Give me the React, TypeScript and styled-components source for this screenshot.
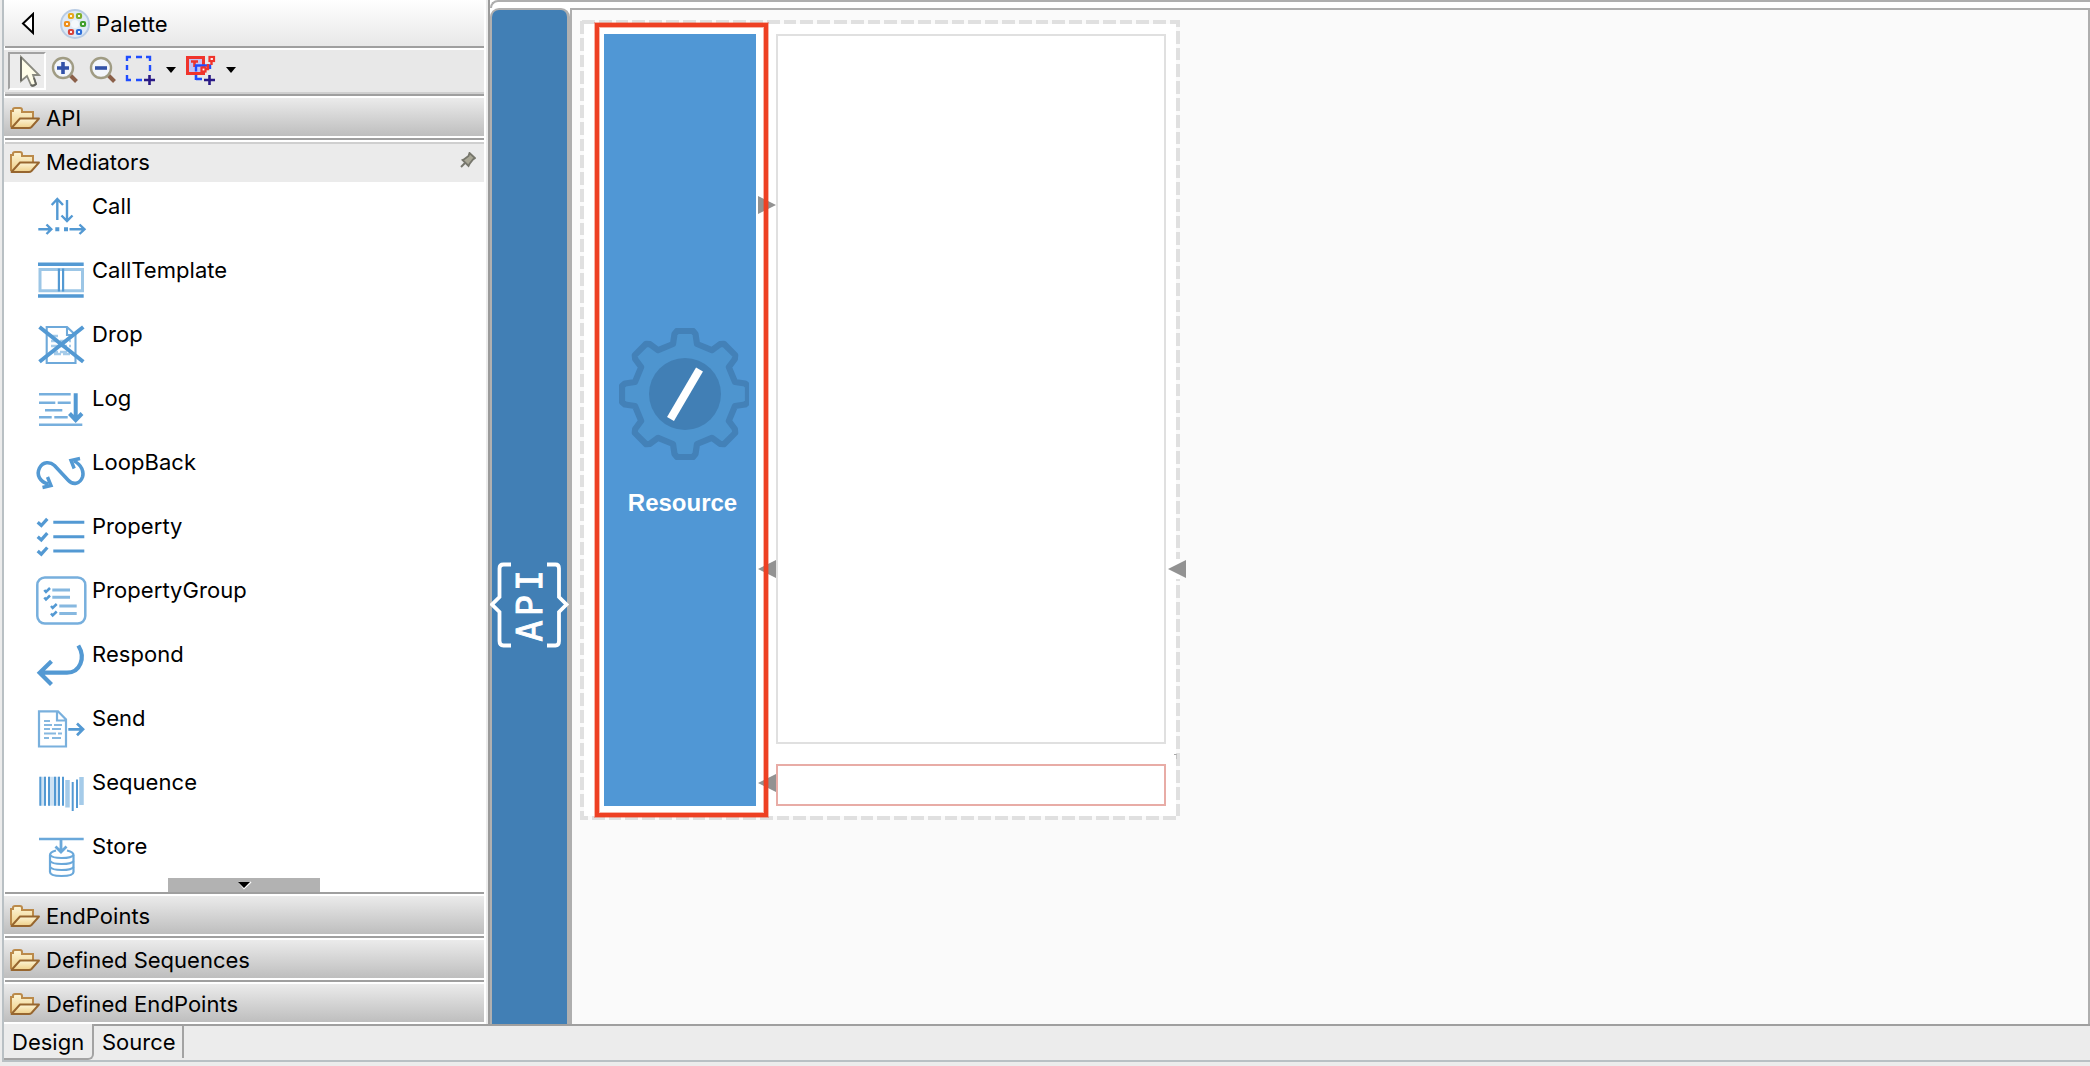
import React from 'react';
import styled, { createGlobalStyle } from 'styled-components';

const GlobalStyle = createGlobalStyle`
  * { box-sizing: border-box; }
  html, body { margin: 0; padding: 0; overflow: hidden; }
  body { font-family: Inter, "Liberation Sans", sans-serif; color: #000; background: #ececec; }
  svg { display: block; flex: none; }
`;

const LINE = '#9f9f9f';
const ICON = '#5399d3';
const SOFT = '#a5cbe9';

const Window = styled.div`
  width: 2090px;
  height: 1066px;
  display: flex;
  flex-direction: column;
  background: #ececec;
`;

const Workspace = styled.div`
  height: 1024px;
  display: flex;
`;

const PalettePane = styled.aside`
  width: 490px;
  display: flex;
  background: #ececec;
  border-right: 2px solid #9b9b9b;
  padding-left: 2px;
`;

const PaletteBody = styled.div`
  width: 484px;
  border-left: 2px solid #b9c0c4;
  border-right: 2px solid #fff;
  background: #fff;
  display: flex;
  flex-direction: column;
`;

const Rule = styled.div<{ $top?: number; $bottom?: number; $tone?: string }>`
  flex: none;
  height: 2px;
  margin: ${(p) => p.$top ?? 0}px 0 ${(p) => p.$bottom ?? 0}px 1px;
  background: ${(p) => p.$tone ?? LINE};
`;

const Label = styled.span<{ $ls?: number }>`
  font-size: 22px;
  line-height: 28px;
  white-space: nowrap;
  letter-spacing: ${(p) => p.$ls ?? 0}px;
`;

const PaletteHeader = styled.header`
  height: 46px;
  flex: none;
  display: flex;
  align-items: center;
  padding: 2px 0 0 17px;
  background: linear-gradient(#fff, #e8e8e8);
  & > svg:nth-child(2) { margin: 0 6px 0 25px; }
`;

const Toolbar = styled.div`
  height: 42px;
  flex: none;
  display: flex;
  align-items: center;
  background: #e8e8e8;
  padding-left: 4px;
`;

const ToolButton = styled.div<{ $w: number; $active?: boolean }>`
  width: ${(p) => p.$w}px;
  height: 38px;
  display: flex;
  align-items: center;
  justify-content: center;
  border: 2px solid transparent;
  padding-bottom: 2px;
  ${(p) => p.$active && 'background:#ececec;border-color:#a2a2a2 #fff #fff #a2a2a2;padding:0 0 0 5px;'}
`;

const DrawerHead = styled.div<{ $open?: boolean }>`
  height: 38px;
  flex: none;
  display: flex;
  align-items: center;
  gap: 6px;
  padding: ${(p) => (p.$open ? '0 8px 2px 6px' : '2px 8px 0 6px')};
  background: ${(p) => (p.$open ? '#ebebeb' : 'linear-gradient(#ebebeb, #bebebe)')};
`;

const Spacer = styled.div`
  flex: 1;
`;

const Items = styled.div`
  height: 696px;
  flex: none;
  overflow: hidden;
  padding-top: 8px;
`;

const Item = styled.div`
  height: 64px;
  display: flex;
  padding-left: 32px;
  gap: 4px;
`;

const ItemLabel = styled(Label)`
  padding-top: 2px;
`;

const ScrollDown = styled.div`
  width: 152px;
  height: 14px;
  flex: none;
  margin-left: 164px;
  background: #b2b2b2;
  display: flex;
  justify-content: center;
`;

const Editor = styled.main`
  width: 1600px;
  display: flex;
  flex-direction: column;
  background: #fff;
`;

const EditorTop = styled.div`
  height: 8px;
  flex: none;
  border: 2px solid #aeaeae;
  border-width: 2px 0 0 2px;
  border-top-left-radius: 9px;
`;

const EditorBody = styled.div`
  flex: 1;
  display: flex;
`;

const ApiBar = styled.div`
  width: 80px;
  height: 1016px;
  background: #417fb5;
  border: 2px solid #b0b0b0;
  border-right-width: 3px;
  border-bottom: 0;
  border-radius: 9px 9px 0 0;
  padding-top: 550px;
  & > svg { margin-left: -2px; }
`;

const Canvas = styled.div`
  position: relative;
  width: 1520px;
  background: #fafafa;
  border: 2px solid #aeaeae;
  border-bottom: 0;
`;

const dash = (dir: string) =>
  `repeating-linear-gradient(to ${dir}, #e0e0e0 0 12.8px, transparent 12.8px 16.8px)`;

const ResourceShape = styled.div`
  position: absolute;
  left: 8px;
  top: 10px;
  width: 600px;
  height: 800px;
  background: linear-gradient(#fff, #fff) 4px 4px / 592px 792px no-repeat;
`;

const DashEdge = styled.div<{ $x: number; $y: number; $w: number; $h: number; $shift: number }>`
  position: absolute;
  left: ${(p) => p.$x}px;
  top: ${(p) => p.$y}px;
  width: ${(p) => p.$w}px;
  height: ${(p) => p.$h}px;
  overflow: hidden;
  &::before {
    content: '';
    position: absolute;
    inset: ${(p) => (p.$w > p.$h ? `0 0 0 ${p.$shift}px` : `${p.$shift}px 0 0 0`)};
    background: ${(p) => dash(p.$w > p.$h ? 'right' : 'bottom')};
  }
`;

const Compartment = styled.div<{ $y: number; $h: number; $tone: string }>`
  position: absolute;
  left: 196px;
  top: ${(p) => p.$y}px;
  width: 390px;
  height: ${(p) => p.$h}px;
  background: #fff;
  border: 2px solid ${(p) => p.$tone};
`;

const ResourceBlock = styled.div`
  position: absolute;
  left: 24px;
  top: 14px;
  width: 152px;
  height: 772px;
  background: #5097d5;
  display: flex;
  flex-direction: column;
  align-items: center;
  padding: 294px 0 0 7px;
`;

const ResourceName = styled.div`
  margin-top: 29px;
  margin-left: -2px;
  font: bold 24px/28px "Liberation Sans", Arial, sans-serif;
  color: #fff;
`;

const Highlight = styled.div`
  position: absolute;
  left: 15px;
  top: 3px;
  width: 173px;
  height: 794px;
  border: 4px solid #ee4023;
  box-shadow: 0 0 0 1px rgba(238, 64, 35, 0.4), inset 0 0 0 1px rgba(238, 64, 35, 0.4);
`;

const Port = styled.div<{ $x: number; $y: number; $right?: boolean }>`
  position: absolute;
  left: ${(p) => p.$x}px;
  top: ${(p) => p.$y}px;
  width: 18px;
  height: 18px;
  background: #929292;
  clip-path: ${(p) => (p.$right ? 'polygon(0 0, 100% 50%, 0 100%)' : 'polygon(100% 0, 0 50%, 100% 100%)')};
`;

const PortGap = styled.div`
  position: absolute;
  left: 588px;
  top: 539px;
  width: 12px;
  height: 20px;
  background: #fff;
`;

const CornerMark = styled.div`
  position: absolute;
  left: 594px;
  top: 734px;
  width: 3px;
  height: 5px;
  border-top: 1px solid #a8a8a8;
  border-right: 1px solid #c4c4c4;
`;

const PageTabs = styled.footer`
  height: 38px;
  flex: none;
  margin-left: 2px;
  display: flex;
  border-bottom: 2px solid #b9c0c4;
  border-left: 2px solid #b9c0c4;
`;

const PageTab = styled.div<{ $w: number; $active?: boolean }>`
  width: ${(p) => p.$w}px;
  height: ${(p) => (p.$active ? 36 : 34)}px;
  padding: ${(p) => (p.$active ? '4px 0 0 8px' : '2px 0 0 8px')};
  border-right: 2px solid #a3a3a3;
  ${(p) => (p.$active ? 'border-bottom:2px solid #a3a3a3;border-bottom-right-radius:6px;' : 'border-top:2px solid #9f9f9f;')}
`;

const TabFill = styled.div`
  flex: 1;
  height: 2px;
  background: #9f9f9f;
`;

const BackArrow = () => (
  <svg width="14" height="24" viewBox="0 0 14 24">
    <path d="M12 2 V21 L2 11.5 Z" fill="#fff" stroke="#000" strokeWidth="2" />
  </svg>
);

const PaletteIcon = () => {
  const dots: [number, number, string][] = [
    [11, 7, '#e8a81c'], [19, 7, '#7fae2b'], [7, 15, '#ee8f1a'],
    [23, 15, '#3f9e2d'], [11, 23, '#d8443c'], [19, 23, '#2e6fd8'],
  ];
  return (
    <svg width="30" height="30" viewBox="0 0 30 30">
      <circle cx="15" cy="15" r="14" fill="#dfeaf6" stroke="#b9cce4" strokeWidth="2" />
      <circle cx="15" cy="15" r="4" fill="#f4f8fc" />
      {dots.map(([x, y, c]) => (
        <rect key={c} x={x - 2} y={y - 2} width="4" height="4" rx="1" fill="#fff" stroke={c} strokeWidth="2.2" />
      ))}
    </svg>
  );
};

const CursorIcon = () => (
  <svg width="22" height="34" viewBox="0 0 22 34">
    <path d="M2 3 V27 L8 22 L12 31 Q14 33 17 30 L14 21 H20 Z" fill="#fffde9" stroke="#8a8a80" strokeWidth="1.8" />
    <path d="M2 3 V27 M12 31 Q14 33 17 30 L15 24" fill="none" stroke="#66665f" strokeWidth="1.8" />
  </svg>
);

const Magnifier = ({ plus }: { plus?: boolean }) => (
  <svg width="28" height="28" viewBox="0 0 28 28">
    <path d="M19 19 L25.5 25.5" stroke="#8b6049" strokeWidth="4" />
    <circle cx="12" cy="12" r="10" fill="#f3f6fb" stroke="#a09c84" strokeWidth="2.4" />
    <path d={plus ? 'M6 12 H18 M12 6 V18' : 'M6 12 H18'} stroke="#3252a8" strokeWidth="3.6" />
  </svg>
);

const Marquee = () => (
  <svg width="30" height="30" viewBox="0 0 30 30" fill="none">
    <path d="M2 6 V2 H6 M11 2 H17 M21 2 H25 V6 M2 10 V15 M25 10 V16 M2 20 V25 H6 M11 25 H17" stroke="#1f4dff" strokeWidth="2.4" />
    <path d="M19 25 H30 M24.5 20 V30" stroke="#2a1a86" strokeWidth="2.6" />
  </svg>
);

const LinkTool = () => (
  <svg width="30" height="30" viewBox="0 0 30 30" fill="none">
    <path d="M10 25 V19 M10 24 H16" stroke="#1f4dff" strokeWidth="2.6" />
    <rect x="1.5" y="2.500" width="16" height="16" fill="#c3c4f5" stroke="#f0342c" strokeWidth="3" />
    <path d="M5 6.500 H12 M8.500 6.500 V12" stroke="#f0342c" strokeWidth="2.600" />
    <path d="M10 16.500 V10.500 H24 V14" stroke="#1f4dff" strokeWidth="2.400" />
    <path d="M19 14 H22 V9 M25.500 5 V10" stroke="#f0342c" strokeWidth="2.400" />
    <rect x="23.500" y="2" width="4.500" height="4" fill="#fff" stroke="#f0342c" strokeWidth="2.200" />
    <rect x="15.500" y="12.500" width="4" height="4" fill="#fff" stroke="#f0342c" strokeWidth="2.200" />
    <path d="M18 25 H29 M23.500 20 V30" stroke="#2a1a86" strokeWidth="2.600" />
  </svg>
);

const Caret = () => (
  <svg width="10" height="6" viewBox="0 0 10 6"><path d="M0 0 H10 L5 6 Z" fill="#000" /></svg>
);

const Folder = () => (
  <svg width="30" height="22" viewBox="0 0 30 22">
    <defs>
      <linearGradient id="paper" x1="0" y1="0" x2="0" y2="1">
        <stop offset="0" stopColor="#fdf6d8" /><stop offset="1" stopColor="#efcf88" />
      </linearGradient>
    </defs>
    <path d="M1 20 V4 H3 V2.500 Q3 1 5 1 H10 Q12 1 12 3 V5 H23 V11" fill="url(#paper)" stroke="#bb8a4a" strokeWidth="2" />
    <path d="M1.500 21 L10 11.500 H29 L21.500 20 Q20.500 21 19 21 Z" fill="url(#paper)" stroke="#97662f" strokeWidth="1.9" strokeLinejoin="round" />
  </svg>
);

const PinSvg = styled.svg`
  margin-bottom: 4px;
`;

const Pin = () => (
  <PinSvg width="16" height="16" viewBox="0 0 16 16">
    <path d="M1 15 L5 11" stroke="#76766c" strokeWidth="2" />
    <path d="M9.500 1 L15 6 L13 7.500 L9.500 12 L8.500 14 L2.500 8 L4.500 7 L8.500 4 Z" fill="#a9a796" stroke="#76766c" strokeWidth="1.800" />
  </PinSvg>
);

const glyphs: Record<string, React.ReactNode> = {
  Call: (
    <g strokeWidth="2.400">
      <path d="M21.300 30 V9 M15.700 15 L21.300 9 L27 15 M31 10 V31 M25.500 25.500 L31 31 L36.500 25.500" />
      <path d="M2.300 39.300 H15 M10.500 34.500 L15.300 39.300 L10.500 44 M33.500 39.300 H48 M43.500 34.500 L48.500 39.300 L43.500 44" />
      <path d="M19.300 39.300 H23.300 M28 39.300 H32" strokeWidth="4" />
    </g>
  ),
  CallTemplate: (
    <g>
      <path d="M2 10.300 H47.700 M2 42 H47.700" strokeWidth="3.600" />
      <path d="M4 15.500 H46.500 V36.800 H4 Z" stroke="#9cc6e6" strokeWidth="3" />
      <path d="M25 17 V35.500" stroke="#fff" strokeWidth="5" />
      <path d="M22.900 14.500 V37.500 M27.100 14.500 V37.500" strokeWidth="2.200" />
    </g>
  ),
  Drop: (
    <g>
      <path d="M10.700 9 H31 L39.500 17 V45 H10.700 Z M31 9 V17 H39" strokeWidth="2.100" stroke="#6ea9da" />
      <path d="M15 18 H22 M15 23 H35 M15 28 H35 M15 34 H35 M18 36 H34" strokeWidth="2.400" stroke={SOFT} strokeDasharray="7 2" />
      <path d="M3.500 9 L47.300 43.700 M47.300 9 L3.500 43.700" strokeWidth="4" />
    </g>
  ),
  Log: (
    <g stroke="#77afdd" strokeWidth="2.600">
      <path d="M3 12.300 H34.700 M3 20.700 H19.300 M21.700 20.700 H34.700 M9 28.300 H26.300 M3 35.300 H15.700 M18.300 35.300 H31.700 M3 42.700 H46.300" />
      <path d="M39.700 11.300 V38 M33.500 31.500 L39.700 38 L46 31.500" stroke={ICON} strokeWidth="4" />
    </g>
  ),
  LoopBack: (
    <g strokeWidth="3">
      <path d="M12.500 38 C4 36 0 29 3.500 22 C7 15.500 14 15.500 18.500 19.500 L32 34 C37 39.500 44 38 46.500 31 C48 26 46 19 38 15" strokeWidth="3.600" />
      <path d="M6.500 41.500 L15 39.500 L11.500 31 M38.200 22.500 L35 14.500 L44 12.500" strokeWidth="3.400" />
    </g>
  ),
  Property: (
    <g>
      <path d="M17.300 12.300 H48.300 M17.300 26.700 H48.300 M17.300 41 H48.300" strokeWidth="3" />
      <path d="M1.700 12.300 L5.300 15.500 L11.300 8.800 M1.700 26.700 L5.300 29.900 L11.300 23.200 M1.700 41 L5.300 44.200 L11.300 37.500" strokeWidth="3.300" />
    </g>
  ),
  PropertyGroup: (
    <g>
      <rect x="1.300" y="3.500" width="48" height="46" rx="7.500" stroke="#77afdd" strokeWidth="2.500" />
      <path d="M16.300 16 H34 M16.300 23.200 H34 M23.300 32 H40.700 M23.300 39.500 H40.700" stroke="#86b8e0" strokeWidth="2.900" />
      <path d="M8.300 16 L10 18 L14 14 M8.300 23.500 L10 25.500 L14 21.500 M15 32 L16.700 34 L20.700 30 M15 39.500 L16.700 41.500 L20.700 37.500" strokeWidth="2.500" />
    </g>
  ),
  Respond: (
    <path d="M42.300 7.500 C50 20 44 34.700 31 34.700 H3.500 M15.500 23.300 L3.700 34.700 L15.500 46.500" strokeWidth="4.200" />
  ),
  Send: (
    <g>
      <path d="M3 9.300 H22 L30 17.500 V44.500 H3 Z M21 9.300 V18.500 H30" strokeWidth="2.200" stroke="#79b0dd" />
      <path d="M8 19 H14 M8 23 H16 M18 23 H26 M8 27 H14 M16 27 H25 M8 31.500 H20 M22 31.500 H26 M8 36 H13 M16 36 H25" stroke="#86b8e0" strokeWidth="2.200" />
      <path d="M32.300 27.300 H46.500 M41 21.500 L47 27.300 L41 33.300" strokeWidth="2.700" />
    </g>
  ),
  Sequence: (
    <g strokeWidth="2">
      <path d="M7 10.700 V39.700 M16 10.700 V39.700 M21 10.700 V39.700" stroke={SOFT} strokeWidth="6" opacity=".55" />
      <path d="M4.300 10.700 V39.700 M9 10.700 V39.700 M13 10.700 V39.700 M19 10.700 V39.700 M23 10.700 V39.700 M27 10.700 V39.700" />
      <path d="M31.500 14 V41.500 M45.500 11 V39" stroke={SOFT} strokeWidth="4.500" />
      <path d="M36.700 16 V45 M41 13.500 V42" />
    </g>
  ),
  Store: (
    <g strokeWidth="2.200" stroke="#6aa8da">
      <path d="M3 9 H47.700" strokeWidth="2.600" />
      <path d="M25 9 V21 M19.500 16.500 L25 22 L30.500 16.500" strokeWidth="2.800" />
      <path d="M20 20.500 Q14 22 14 25 V42 Q14 46 25.500 46 Q37.500 46 37.500 42 V25 Q37.500 22 31 20.500" />
      <path d="M14 25 Q16 28 25.500 28 Q36 28 37.500 25 M14 31 Q16 34 25.500 34 Q36 34 37.500 31 M14 37 Q16 40 25.500 40 Q36 40 37.500 37" />
    </g>
  ),
};

const MediatorIcon = ({ name }: { name: string }) => (
  <svg width="52" height="52" viewBox="0 0 52 52" fill="none" stroke={ICON}>{glyphs[name]}</svg>
);

const ApiLogo = () => (
  <svg width="80" height="92" viewBox="490 560 80 92" fill="none" stroke="#fff" strokeWidth="3.800">
    <path d="M511 564.500 H503.500 Q499.500 564.500 499.500 568.500 V597 L492 604.500 L499.500 612 V641 Q499.500 645.500 503.500 645.500 H511" />
    <path d="M547 564.500 H555.500 Q559 564.500 559 568.500 V597 L566.500 604.500 L559 612 V641 Q559 645.500 555.500 645.500 H547" />
    <text
      transform="translate(541.500 641.500) rotate(-90)"
      fill="#fff"
      strokeWidth="0.900"
      fontFamily='"DejaVu Sans Mono", monospace'
      fontSize="35"
      letterSpacing="4.200"
    >
      API
    </text>
  </svg>
);

const TOOTH = [[-12, -50], [-10.5, -60], [-8, -63], [8, -63], [10.5, -60], [12, -50]];
const gearPath = `M${Array.from({ length: 8 }, (_, i) => {
  const a = (i * Math.PI) / 4;
  return TOOTH.map(([x, y]) =>
    `${(x * Math.cos(a) - y * Math.sin(a)).toFixed(2)} ${(x * Math.sin(a) + y * Math.cos(a)).toFixed(2)}`
  ).join(' L');
}).join(' L')} Z`;

const Gear = () => (
  <svg width="130" height="132" viewBox="-66 -66 130 132">
    <path d={gearPath} fill="#4e95cf" stroke="#4381b8" strokeWidth="6.200" strokeLinejoin="round" />
    <circle r="36" fill="#417fb5" />
    <path d="M14.500 -24.500 L-14.500 25" stroke="#fff" strokeWidth="8" />
  </svg>
);

const mediators = [
  'Call', 'CallTemplate', 'Drop', 'Log', 'LoopBack', 'Property',
  'PropertyGroup', 'Respond', 'Send', 'Sequence', 'Store',
];

export default function App() {
  return (
    <>
      <GlobalStyle />
      <Window>
        <Workspace>
          <PalettePane>
            <PaletteBody>
              <PaletteHeader>
                <BackArrow />
                <PaletteIcon />
                <Label $ls={0.1}>Palette</Label>
              </PaletteHeader>
              <Rule $bottom={2} />
              <Toolbar>
                <ToolButton $w={38} $active><CursorIcon /></ToolButton>
                <ToolButton $w={38}><Magnifier plus /></ToolButton>
                <ToolButton $w={38}><Magnifier /></ToolButton>
                <ToolButton $w={36}><Marquee /></ToolButton>
                <ToolButton $w={26}><Caret /></ToolButton>
                <ToolButton $w={34}><LinkTool /></ToolButton>
                <ToolButton $w={26}><Caret /></ToolButton>
              </Toolbar>
              <Rule $tone="#cfcfcf" />
              <Rule $bottom={2} />
              <DrawerHead><Folder /><Label>API</Label></DrawerHead>
              <Rule $top={2} $bottom={2} />
              <Rule $tone="#cfcfcf" />
              <DrawerHead $open><Folder /><Label>Mediators</Label><Spacer /><Pin /></DrawerHead>
              <Items>
                {mediators.map((name) => (
                  <Item key={name}>
                    <MediatorIcon name={name} />
                    <ItemLabel $ls={0.05}>{name}</ItemLabel>
                  </Item>
                ))}
              </Items>
              <ScrollDown>
                <svg width="18" height="14" viewBox="0 0 18 14">
                  <path d="M4 4 L9 10.500 L16 4" fill="#fff" stroke="#fff" strokeWidth="1.500" />
                  <path d="M3 4 H15 L9 10 Z" fill="#000" />
                </svg>
              </ScrollDown>
              <Rule $bottom={2} />
              <DrawerHead><Folder /><Label $ls={0.05}>EndPoints</Label></DrawerHead>
              <Rule $top={2} $bottom={2} />
              <DrawerHead><Folder /><Label>Defined Sequences</Label></DrawerHead>
              <Rule $top={2} $bottom={2} />
              <DrawerHead><Folder /><Label $ls={0.05}>Defined EndPoints</Label></DrawerHead>
            </PaletteBody>
          </PalettePane>
          <Editor>
            <EditorTop />
            <EditorBody>
              <ApiBar><ApiLogo /></ApiBar>
              <Canvas>
                <ResourceShape>
                  <DashEdge $x={0} $y={0} $w={600} $h={4} $shift={2} />
                  <DashEdge $x={0} $y={796} $w={600} $h={4} $shift={-4.8} />
                  <DashEdge $x={0} $y={0} $w={4} $h={800} $shift={1.2} />
                  <DashEdge $x={596} $y={0} $w={4} $h={796} $shift={-6} />
                  <Compartment $y={14} $h={710} $tone="#e0e0e0" />
                  <Compartment $y={744} $h={42} $tone="#e8aca6" />
                  <ResourceBlock>
                    <Gear />
                    <ResourceName>Resource</ResourceName>
                  </ResourceBlock>
                  <PortGap />
                  <CornerMark />
                  <Port $x={178} $y={176} $right />
                  <Port $x={178} $y={540} />
                  <Port $x={178} $y={754} />
                  <Port $x={588} $y={540} />
                  <Highlight />
                </ResourceShape>
              </Canvas>
            </EditorBody>
          </Editor>
        </Workspace>
        <PageTabs>
          <PageTab $w={90} $active><Label>Design</Label></PageTab>
          <PageTab $w={90}><Label>Source</Label></PageTab>
          <TabFill />
        </PageTabs>
      </Window>
    </>
  );
}
